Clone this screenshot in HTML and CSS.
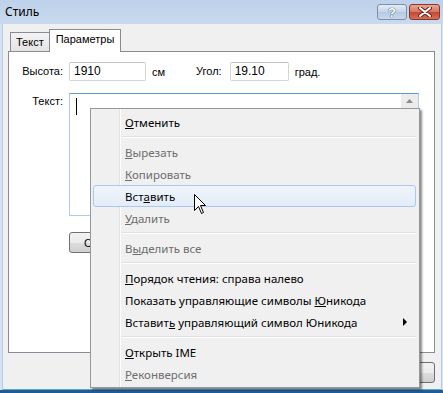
FILE: index.html
```html
<!DOCTYPE html>
<html lang="ru">
<head>
   <meta charset="UTF-8">
   <title>Стиль</title>
   <link rel="stylesheet" href="styles.css">
</head>
<body>

<div class="window">
   <!-- Title bar -->
   <div class="titlebar">
       <span class="title">Стиль</span>
       <div class="caption-buttons">
           <span class="cap-btn help">?</span>
           <span class="cap-btn close">
               <svg width="14" height="10" viewBox="0 0 14 10">
                   <path d="M2 1 L12 9 M12 1 L2 9" stroke="#6b2418" stroke-width="4" stroke-linecap="round"/>
                   <path d="M2 1 L12 9 M12 1 L2 9" stroke="#fff" stroke-width="2" stroke-linecap="round"/>
               </svg>
           </span>
       </div>
   </div>

   <div class="client">
       <div class="tabs">
           <span class="tab">Текст</span>
           <span class="tab active">Параметры</span>
       </div>

       <div class="panel">
           <div class="form">
               <span class="label">Высота:</span>
               <div class="row">
                   <span class="field size">1910</span>
                   <span class="unit">см</span>
                   <span class="label angle">Угол:</span>
                   <span class="field angle-field">19.10</span>
                   <span class="unit">град.</span>
               </div>

               <span class="label top">Текст:</span>
               <div class="memo">
                   <div class="memo-text"><span class="caret"></span></div>
                   <div class="scroll">
                       <div class="scroll-up">
                           <svg width="7" height="4" viewBox="0 0 7 4"><path d="M0 4 L3.5 0 L7 4 Z" fill="#8a8a8a"/></svg>
                       </div>
                   </div>
               </div>

               <span></span>
               <div><button class="btn small">Сброс</button></div>
           </div>
       </div>

       <div class="buttons">
           <button class="btn">OK</button>
           <button class="btn">Отмена</button>
       </div>
   </div>
   <div class="taskbar"></div>

   <!-- Context menu -->
   <div class="menu">
       <div class="item"><span><u>О</u>тменить</span></div>
       <div class="sep"></div>
       <div class="item disabled"><span><u>В</u>ырезать</span></div>
       <div class="item disabled"><span><u>К</u>опировать</span></div>
       <div class="item hover"><span>Вст<u>а</u>вить</span></div>
       <div class="item disabled"><span><u>У</u>далить</span></div>
       <div class="sep"></div>
       <div class="item disabled"><span>В<u>ы</u>делить все</span></div>
       <div class="sep"></div>
       <div class="item"><span><u>П</u>орядок чтения: справа налево</span></div>
       <div class="item"><span>Показать управляющие символы <u>Ю</u>никода</span></div>
       <div class="item"><span>Вставит<u>ь</u> управляющий символ Юникода</span><span class="arrow"></span></div>
       <div class="sep"></div>
       <div class="item"><span><u>О</u>ткрыть IME</span></div>
       <div class="item disabled"><span><u>Р</u>еконверсия</span></div>
   </div>

   <svg class="cursor" width="13" height="21" viewBox="0 0 13 21">
       <path d="M0.5 0.5 L0.5 16.5 L4.5 12.5 L7.5 19.5 L9.5 18.5 L6.5 11.5 L11.5 11.5 Z" fill="#fff" stroke="#000" stroke-width="1"/>
   </svg>
</div>

</body>
</html>
```

FILE: styles.css
```css
body {
    margin: 0;
    font-family: "Liberation Sans", Arial, sans-serif;
    font-size: 11px;
    color: #000;
}
.window {
    position: relative;
    width: 443px;
    height: 393px;
    overflow: hidden;
    background: #d6e3f2;
    display: flex;
    flex-direction: column;
}
.titlebar {
    height: 24px;
    flex: none;
    display: flex;
    justify-content: space-between;
    background: linear-gradient(#bdd1ea, #c9daee);
}
.title {
    font-family: "Noto Sans", sans-serif;
    font-size: 12px;
    line-height: 24px;
    padding-left: 5px;
}
.caption-buttons {
    display: flex;
    gap: 2px;
    margin: 4px 3px 0 0;
}
.cap-btn {
    height: 16px;
    border-radius: 3px;
    display: flex;
    align-items: center;
    justify-content: center;
    box-sizing: border-box;
}
.help {
    width: 30px;
    border: 1px solid #7d8ea6;
    background: linear-gradient(#e4edf7, #c3d4e8 50%, #b4c9e2 51%, #c7d8ec);
    color: #fff;
    font-weight: bold;
    font-size: 13px;
    text-shadow: 0 0 1px #3a4a60, 0 0 1px #3a4a60;
}
.close {
    width: 31px;
    border: 1px solid #86372b;
    background: linear-gradient(#e9a797, #d7735f 50%, #c7452f 51%, #d4705a);
}
.client {
    flex: 1;
    margin: 0 1px 0 2px;
    border-left: 1px solid #b3cbe6;
    border-right: 1px solid #b3cbe6;
    border-bottom: 1px solid #5aa9d2;
    background: #f0f0f0;
    padding: 6px 6px 6px 5px;
    display: flex;
    flex-direction: column;
}
.taskbar {
    height: 3px;
    flex: none;
    background: #1e5d92;
}
.tabs {
    display: flex;
    align-items: flex-end;
    height: 21px;
    padding-left: 2px;
}
.tab {
    height: 18px;
    line-height: 18px;
    padding: 0 5px;
    border: 1px solid #898c95;
    border-bottom: none;
    background: linear-gradient(#f3f3f3, #e3e3e3);
}
.tab.active {
    position: relative;
    height: 22px;
    line-height: 19px;
    margin: 0 0 -1px -1px;
    padding: 0 6px;
    background: #fff;
}
.panel {
    height: 302px;
    box-sizing: border-box;
    border: 1px solid #898c95;
    background: #fff;
}
.form {
    display: grid;
    grid-template-columns: 46px 350px;
    column-gap: 6px;
    row-gap: 12px;
    padding: 10px 0 0 8px;
}
.label {
    text-align: right;
    line-height: 19px;
}
.label.top {
    line-height: 13px;
    padding-top: 2px;
}
.row {
    display: flex;
    align-items: center;
    height: 19px;
}
.field {
    height: 19px;
    box-sizing: border-box;
    border: 1px solid #d5d5d5;
    border-top-color: #c2c2c2;
    border-radius: 2px;
    padding: 0 4px;
    line-height: 17px;
    font-size: 12px;
}
.size {
    width: 77px;
}
.unit {
    margin-left: 6px;
}
.angle {
    margin-left: 31px;
}
.angle-field {
    width: 59px;
    margin-left: 8px;
}
.memo {
    height: 123px;
    box-sizing: border-box;
    border: 1px solid #b4cbe3;
    border-top-color: #5b9bd6;
    display: flex;
}
.memo-text {
    flex: 1;
    padding: 4px 6px;
}
.caret {
    display: block;
    width: 1px;
    height: 17px;
    background: #000;
}
.scroll {
    width: 17px;
    background: #f4f4f4;
}
.scroll-up {
    height: 14px;
    display: flex;
    align-items: center;
    justify-content: center;
    background: #ececec;
}
.btn {
    width: 75px;
    height: 21px;
    border: 1px solid #707070;
    border-radius: 3px;
    background: linear-gradient(#f2f2f2, #ebebeb 50%, #dddddd 51%, #cfcfcf);
    font-family: "Liberation Sans", Arial, sans-serif;
    font-size: 11px;
    padding: 0;
}
.btn.small {
    width: 56px;
    padding-left: 6px;
}
.form .btn {
    margin-top: 4px;
}
.buttons {
    display: flex;
    justify-content: flex-end;
    gap: 6px;
    margin-top: 9px;
}
.menu {
    position: absolute;
    left: 90px;
    top: 108px;
    width: 330px;
    box-sizing: border-box;
    padding: 2px 3px 2px 2px;
    border: 1px solid #979797;
    background: linear-gradient(to right, transparent 28px, #e2e3e3 28px, #e2e3e3 29px, #fff 29px, #fff 30px, transparent 30px), #f0f0f0;
    box-shadow: 2px 2px 2px rgba(0, 0, 0, 0.45);
    font-family: "Noto Sans", sans-serif;
    font-size: 11.5px;
}
.item {
    display: flex;
    align-items: center;
    height: 22px;
    box-sizing: border-box;
    padding-left: 31px;
    border: 1px solid transparent;
    border-radius: 3px;
    color: #000;
}
.item.disabled {
    color: #6d6d6d;
}
.item.hover {
    border-color: #a9c9ef;
    background: linear-gradient(#f0f5fc, #e3ecf8);
}
.arrow {
    margin: 0 8px 0 auto;
    border-left: 4px solid #000;
    border-top: 4px solid transparent;
    border-bottom: 4px solid transparent;
}
.sep {
    height: 1px;
    margin: 3px 0 3px 29px;
    background: #e0e0e0;
    border-bottom: 1px solid #fff;
}
.cursor {
    position: absolute;
    left: 194px;
    top: 194px;
}
```
